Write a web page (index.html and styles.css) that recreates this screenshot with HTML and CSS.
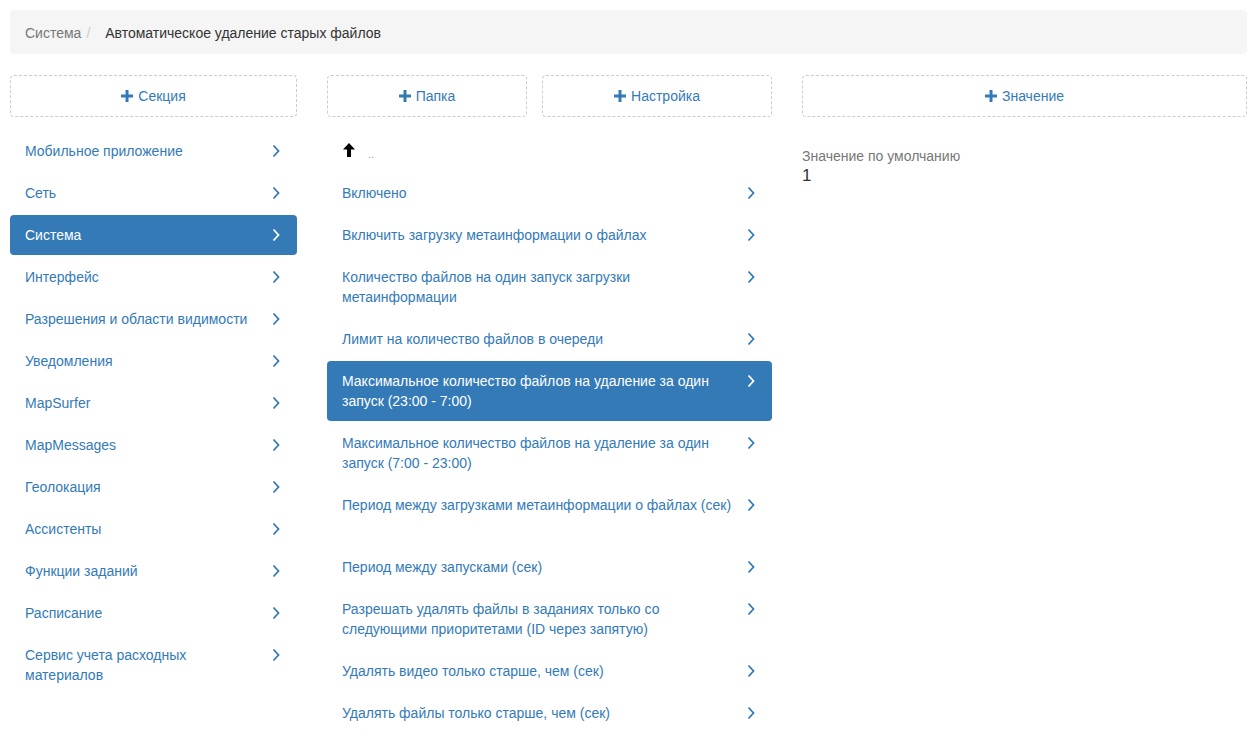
FILE: index.html
```html
<!DOCTYPE html>
<html lang="ru">
<head>
<meta charset="utf-8">
<title>Автоматическое удаление старых файлов</title>
<link rel="stylesheet" href="styles.css">
</head>
<body>
<div class="page">
  <ol class="breadcrumb">
    <li class="crumb">Система</li>
    <li class="crumb active">Автоматическое удаление старых файлов</li>
  </ol>
  <div class="columns">
    <div class="col col-sections">
      <div class="btn-row">
        <a class="add-btn grow"><svg class="plus" viewBox="0 0 12 12"><rect x="4.5" y="0" width="3" height="12"/><rect x="0" y="4.5" width="12" height="3"/></svg>Секция</a>
      </div>
      <ul class="list">
        <li class="item"><span class="text">Мобильное приложение</span><svg class="chev" viewBox="0 0 8 14"><polyline points="1.5,1.5 6.5,7 1.5,12.5"/></svg></li>
        <li class="item"><span class="text">Сеть</span><svg class="chev" viewBox="0 0 8 14"><polyline points="1.5,1.5 6.5,7 1.5,12.5"/></svg></li>
        <li class="item active"><span class="text">Система</span><svg class="chev" viewBox="0 0 8 14"><polyline points="1.5,1.5 6.5,7 1.5,12.5"/></svg></li>
        <li class="item"><span class="text">Интерфейс</span><svg class="chev" viewBox="0 0 8 14"><polyline points="1.5,1.5 6.5,7 1.5,12.5"/></svg></li>
        <li class="item"><span class="text">Разрешения и области видимости</span><svg class="chev" viewBox="0 0 8 14"><polyline points="1.5,1.5 6.5,7 1.5,12.5"/></svg></li>
        <li class="item"><span class="text">Уведомления</span><svg class="chev" viewBox="0 0 8 14"><polyline points="1.5,1.5 6.5,7 1.5,12.5"/></svg></li>
        <li class="item"><span class="text">MapSurfer</span><svg class="chev" viewBox="0 0 8 14"><polyline points="1.5,1.5 6.5,7 1.5,12.5"/></svg></li>
        <li class="item"><span class="text">MapMessages</span><svg class="chev" viewBox="0 0 8 14"><polyline points="1.5,1.5 6.5,7 1.5,12.5"/></svg></li>
        <li class="item"><span class="text">Геолокация</span><svg class="chev" viewBox="0 0 8 14"><polyline points="1.5,1.5 6.5,7 1.5,12.5"/></svg></li>
        <li class="item"><span class="text">Ассистенты</span><svg class="chev" viewBox="0 0 8 14"><polyline points="1.5,1.5 6.5,7 1.5,12.5"/></svg></li>
        <li class="item"><span class="text">Функции заданий</span><svg class="chev" viewBox="0 0 8 14"><polyline points="1.5,1.5 6.5,7 1.5,12.5"/></svg></li>
        <li class="item"><span class="text">Расписание</span><svg class="chev" viewBox="0 0 8 14"><polyline points="1.5,1.5 6.5,7 1.5,12.5"/></svg></li>
        <li class="item"><span class="text">Сервис учета расходных материалов</span><svg class="chev" viewBox="0 0 8 14"><polyline points="1.5,1.5 6.5,7 1.5,12.5"/></svg></li>
      </ul>
    </div>
    <div class="col col-settings">
      <div class="btn-row">
        <a class="add-btn folder"><svg class="plus" viewBox="0 0 12 12"><rect x="4.5" y="0" width="3" height="12"/><rect x="0" y="4.5" width="12" height="3"/></svg>Папка</a>
        <a class="add-btn grow"><svg class="plus" viewBox="0 0 12 12"><rect x="4.5" y="0" width="3" height="12"/><rect x="0" y="4.5" width="12" height="3"/></svg>Настройка</a>
      </div>
      <ul class="list">
        <li class="item up"><svg class="arrow-up" viewBox="0 0 12 14"><polygon points="6,0 12,6.5 8,6.5 8,14 4,14 4,6.5 0,6.5"/></svg><span class="dots">..</span></li>
        <li class="item"><span class="text">Включено</span><svg class="chev" viewBox="0 0 8 14"><polyline points="1.5,1.5 6.5,7 1.5,12.5"/></svg></li>
        <li class="item"><span class="text">Включить загрузку метаинформации о файлах</span><svg class="chev" viewBox="0 0 8 14"><polyline points="1.5,1.5 6.5,7 1.5,12.5"/></svg></li>
        <li class="item"><span class="text">Количество файлов на один запуск загрузки метаинформации</span><svg class="chev" viewBox="0 0 8 14"><polyline points="1.5,1.5 6.5,7 1.5,12.5"/></svg></li>
        <li class="item"><span class="text">Лимит на количество файлов в очереди</span><svg class="chev" viewBox="0 0 8 14"><polyline points="1.5,1.5 6.5,7 1.5,12.5"/></svg></li>
        <li class="item active"><span class="text">Максимальное количество файлов на удаление за один запуск (23:00 - 7:00)</span><svg class="chev" viewBox="0 0 8 14"><polyline points="1.5,1.5 6.5,7 1.5,12.5"/></svg></li>
        <li class="item"><span class="text">Максимальное количество файлов на удаление за один запуск (7:00 - 23:00)</span><svg class="chev" viewBox="0 0 8 14"><polyline points="1.5,1.5 6.5,7 1.5,12.5"/></svg></li>
        <li class="item tall"><span class="text">Период между загрузками метаинформации о файлах (сек)</span><svg class="chev" viewBox="0 0 8 14"><polyline points="1.5,1.5 6.5,7 1.5,12.5"/></svg></li>
        <li class="item"><span class="text">Период между запусками (сек)</span><svg class="chev" viewBox="0 0 8 14"><polyline points="1.5,1.5 6.5,7 1.5,12.5"/></svg></li>
        <li class="item"><span class="text">Разрешать удалять файлы в заданиях только со следующими приоритетами (ID через запятую)</span><svg class="chev" viewBox="0 0 8 14"><polyline points="1.5,1.5 6.5,7 1.5,12.5"/></svg></li>
        <li class="item"><span class="text">Удалять видео только старше, чем (сек)</span><svg class="chev" viewBox="0 0 8 14"><polyline points="1.5,1.5 6.5,7 1.5,12.5"/></svg></li>
        <li class="item"><span class="text">Удалять файлы только старше, чем (сек)</span><svg class="chev" viewBox="0 0 8 14"><polyline points="1.5,1.5 6.5,7 1.5,12.5"/></svg></li>
      </ul>
    </div>
    <div class="col col-values">
      <div class="btn-row">
        <a class="add-btn grow"><svg class="plus" viewBox="0 0 12 12"><rect x="4.5" y="0" width="3" height="12"/><rect x="0" y="4.5" width="12" height="3"/></svg>Значение</a>
      </div>
      <div class="value-block">
        <div class="value-label">Значение по умолчанию</div>
        <div class="value">1</div>
      </div>
    </div>
  </div>
</div>
</body>
</html>
```
FILE: styles.css
```css
* { box-sizing: border-box; }
html, body { margin: 0; padding: 0; background: #fff; }
body {
  font-family: "Liberation Sans", Arial, Helvetica, sans-serif;
  font-size: 14px;
  line-height: 20px;
  color: #333;
}
.page { padding: 10px 9px 10px 10px; }

.breadcrumb {
  list-style: none;
  margin: 0 0 21px 0;
  padding: 13px 15px 11px;
  background: #f5f5f5;
  border-radius: 4px;
  display: flex;
}
.crumb { color: #777; }
.crumb.active { color: #333; }
.crumb + .crumb::before {
  content: "/\00a0";
  padding: 0 5px 0 5px;
  color: #ccc;
}
.crumb.active::before { margin-right: 6px; }

.columns { display: flex; gap: 30px; align-items: flex-start; }
.col-sections { width: 287px; }
.col-settings { width: 445px; }
.col-values { width: 445px; }

.btn-row { display: flex; gap: 15px; margin-bottom: 14px; }
.add-btn {
  display: flex;
  align-items: center;
  justify-content: center;
  height: 42px;
  border: 1px dashed #ccc;
  border-radius: 4px;
  color: #337ab7;
  cursor: pointer;
}
.add-btn.grow { flex: 1; }
.add-btn.folder { width: 200px; }
.plus { width: 12px; height: 12px; fill: #337ab7; margin-right: 5px; }

.list { list-style: none; margin: 0; padding: 0; }
.item {
  display: flex;
  align-items: flex-start;
  padding: 10px 15px;
  margin-bottom: 2px;
  border-radius: 4px;
  color: #337ab7;
}
.item .text { flex: 1; min-width: 0; }
.item.tall { min-height: 60px; }
.chev {
  width: 8px;
  height: 14px;
  margin: 3px 2px 0 8px;
  fill: none;
  stroke: #337ab7;
  stroke-width: 1.8;
  flex: none;
}
.item.active { background: #337ab7; color: #fff; }
.item.active .chev { stroke: #fff; }

.item.up { align-items: center; height: 40px; padding: 0 15px 0 16px; }
.arrow-up { width: 12px; height: 14px; fill: #000; margin-top: -2px; }
.dots { color: #999; font-size: 11px; line-height: 14px; margin-left: 13px; margin-top: 6px; }

.value-block { padding-top: 15px; }
.value-label { color: #777; }
.value { font-size: 17px; line-height: 20px; color: #333; }
```
